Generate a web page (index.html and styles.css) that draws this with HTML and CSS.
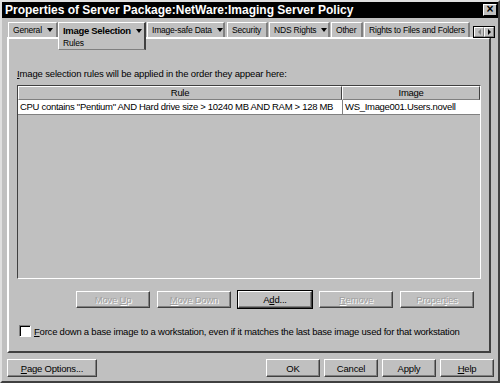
FILE: index.html
```html
<!DOCTYPE html>
<html lang="en">
<head>
    <meta charset="UTF-8">
    <title>Properties of Server Package:NetWare:Imaging Server Policy</title>
    <link rel="stylesheet" href="styles.css">
</head>
<body>
<div class="window">
    <div class="titlebar">
        <span class="title">Properties of Server Package:NetWare:Imaging Server Policy</span>
        <span class="close">&#215;</span>
    </div>

    <div class="tabs">
        <div class="tab w-general">General <span class="caret"></span></div>
        <div class="tab active">
            <div class="tab-head">Image Selection <span class="caret"></span></div>
            <div class="tab-sub">Rules</div>
        </div>
        <div class="tab w-safe">Image-safe Data <span class="caret"></span></div>
        <div class="tab w-security">Security</div>
        <div class="tab w-nds">NDS Rights <span class="caret"></span></div>
        <div class="tab w-other">Other</div>
        <div class="tab w-rights">Rights to Files and Folders <span class="cut"></span></div>
        <div class="scroller">
            <span class="scroll-btn"><span class="tri-left"></span></span>
            <span class="scroll-btn"><span class="tri-right"></span></span>
        </div>
    </div>

    <div class="panel">
        <div class="intro"><u>I</u>mage selection rules will be applied in the order they appear here:</div>

        <div class="list">
            <div class="list-head">
                <div class="head-cell">Rule</div>
                <div class="head-cell">Image</div>
            </div>
            <div class="list-row">
                <div class="cell">CPU contains "Pentium" AND Hard drive size &gt; 10240 MB AND RAM &gt; 128 MB</div>
                <div class="cell">WS_Image001.Users.novell</div>
            </div>
        </div>

        <div class="actions">
            <button class="btn disabled">Move <u>U</u>p</button>
            <button class="btn disabled"><u>M</u>ove Down</button>
            <button class="btn default">A<u>d</u>d...</button>
            <button class="btn disabled"><u>R</u>emove</button>
            <button class="btn disabled">Proper<u>t</u>ies</button>
        </div>

        <label class="check">
            <span class="box"></span>
            <span class="check-text"><u>F</u>orce down a base image to a workstation, even if it matches the last base image used for that workstation</span>
        </label>
    </div>

    <div class="footer">
        <button class="btn wide"><u>P</u>age Options...</button>
        <div class="footer-right">
            <button class="btn small">OK</button>
            <button class="btn small">Cancel</button>
            <button class="btn small">Apply</button>
            <button class="btn small"><u>H</u>elp</button>
        </div>
    </div>
</div>
</body>
</html>
```

FILE: styles.css
```css
body {
    margin: 0;
    font-family: 'Liberation Sans', Arial, sans-serif;
    font-size: 9.5px;
    letter-spacing: -0.3px;
    color: #000;
    background-color: #c0c0c0;
}

.window {
    width: 500px;
    height: 383px;
    box-sizing: border-box;
    border: 2px solid;
    border-color: #dfdfdf #404040 #404040 #dfdfdf;
    background-color: #c0c0c0;
    display: flex;
    flex-direction: column;
}

/* title bar */
.titlebar {
    height: 16px;
    background-color: #000;
    color: #fff;
    display: flex;
    align-items: center;
    justify-content: space-between;
    padding: 0 1px 0 3px;
}

.title {
    font-weight: bold;
    font-size: 12px;
    letter-spacing: 0;
}

.close {
    width: 14px;
    height: 12px;
    box-sizing: border-box;
    background-color: #c0c0c0;
    border: 1px solid;
    border-color: #fff #000 #000 #fff;
    color: #000;
    font-size: 12px;
    font-weight: bold;
    line-height: 9px;
    text-align: center;
    letter-spacing: 0;
}

/* tabs */
.tabs {
    display: flex;
    align-items: flex-start;
    height: 15px;
    margin: 4px 0 0 6px;
    position: relative;
    z-index: 1;
    font-size: 8.5px;
    letter-spacing: -0.2px;
}

.tab {
    height: 15px;
    box-sizing: border-box;
    border-top: 1px solid #fff;
    border-left: 1px solid #fff;
    border-right: 2px solid #808080;
    padding: 0 4px;
    display: flex;
    align-items: center;
    gap: 5px;
    white-space: nowrap;
    overflow: hidden;
}

.w-general { width: 50px; }
.w-safe { width: 78px; margin-left: 1px; }
.w-security { width: 41px; margin-left: 2px; }
.w-nds { width: 61px; margin-left: 1px; }
.w-other { width: 32px; margin-left: 1px; }
.w-rights { width: 106px; margin-left: 1px; padding-right: 1px; gap: 3px; }

.tab.active {
    width: 88px;
    height: 28px;
    flex-direction: column;
    align-items: flex-start;
    gap: 0;
    border-bottom: 1px solid #808080;
    border-right: 2px solid #404040;
    background-color: #c0c0c0;
    padding: 1px 2px 0 4px;
}

.tab-head {
    display: flex;
    align-items: center;
    gap: 5px;
    font-weight: bold;
    font-size: 9.5px;
    letter-spacing: -0.3px;
    height: 13px;
}

.tab-sub {
    font-size: 8.5px;
    line-height: 12px;
}

.caret {
    flex-shrink: 0;
    width: 0;
    height: 0;
    border-left: 3px solid transparent;
    border-right: 3px solid transparent;
    border-top: 4px solid #000;
}

/* torn edge of the clipped last tab */
.cut {
    flex-shrink: 0;
    width: 4px;
    height: 10px;
    box-sizing: border-box;
    border-left: 1px solid #808080;
    border-radius: 50%;
}

.scroller {
    display: flex;
    margin: 4px 0 0 3px;
    border: 1px solid #000;
}

.scroll-btn {
    width: 10px;
    height: 10px;
    box-sizing: border-box;
    border: 1px solid;
    border-color: #fff #808080 #808080 #fff;
    display: flex;
    align-items: center;
    justify-content: center;
}

.tri-left {
    border-top: 3px solid transparent;
    border-bottom: 3px solid transparent;
    border-right: 3px solid #808080;
}

.tri-right {
    border-top: 3px solid transparent;
    border-bottom: 3px solid transparent;
    border-left: 3px solid #000;
}

/* page panel */
.panel {
    height: 316px;
    margin: 0 7px 0 5px;
    box-sizing: border-box;
    border: 2px solid;
    border-color: #fff #404040 #404040 #fff;
    padding: 29px 8px 0 8px;
}

.intro {
    height: 12px;
    line-height: 12px;
    letter-spacing: -0.15px;
}

.list {
    height: 194px;
    margin-top: 5px;
    box-sizing: border-box;
    border: 1px solid;
    border-color: #404040 #fff #fff #404040;
    background-color: #c0c0c0;
}

.list-head,
.list-row {
    display: grid;
    grid-template-columns: 324px 1fr;
}

.head-cell {
    height: 14px;
    box-sizing: border-box;
    border: 1px solid;
    border-color: #fff #404040 #808080 #fff;
    text-align: center;
    line-height: 12px;
}

.list-row {
    background-color: #fff;
    height: 14px;
    border-bottom: 1px solid #808080;
}

.cell {
    padding-left: 2px;
    line-height: 14px;
    white-space: nowrap;
    overflow: hidden;
}

.cell + .cell {
    border-left: 1px solid #808080;
}

/* buttons */
.btn {
    font-family: inherit;
    font-size: 9.5px;
    letter-spacing: -0.2px;
    color: #000;
    background-color: #c0c0c0;
    box-sizing: border-box;
    border: 1px solid;
    border-color: #fff #404040 #404040 #fff;
    box-shadow: inset -1px -1px 0 #808080;
    padding: 0;
    height: 18px;
}

.btn.disabled {
    color: #a0a0a0;
    text-shadow: 1px 1px 0 #fff;
}

.btn.default {
    outline: 1px solid #000;
}

.actions {
    display: flex;
    justify-content: flex-end;
    gap: 7px;
    margin-top: 12px;
    padding-right: 7px;
}

.actions .btn {
    width: 74px;
    height: 17px;
}

.check {
    display: flex;
    align-items: center;
    gap: 3px;
    margin: 17px 0 0 2px;
}

.check-text {
    white-space: nowrap;
    letter-spacing: -0.22px;
}

.box {
    width: 12px;
    height: 12px;
    flex-shrink: 0;
    box-sizing: border-box;
    background-color: #fff;
    border: 1px solid;
    border-color: #808080 #fff #fff #808080;
    box-shadow: inset 1px 1px 0 #000;
}

/* footer */
.footer {
    display: flex;
    justify-content: space-between;
    margin: 6px 4px 0 5px;
}

.footer-right {
    display: flex;
    gap: 4px;
}

.btn.wide {
    width: 90px;
}

.btn.small {
    width: 54px;
}
```
